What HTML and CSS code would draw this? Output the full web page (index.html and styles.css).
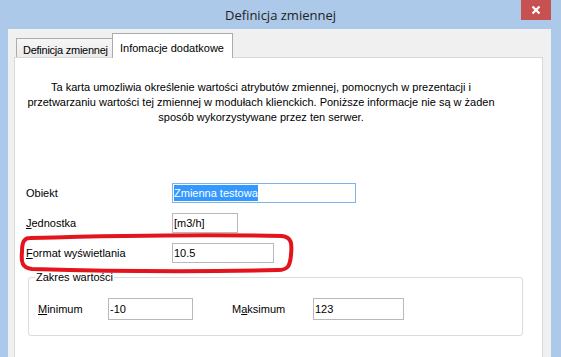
FILE: index.html
```html
<!DOCTYPE html>
<html>
<head>
<meta charset="utf-8">
<link rel="stylesheet" href="styles.css">
</head>
<body>
<div class="window">
  <div class="titlebar">
    <div class="title">Definicja zmiennej</div>
    <div class="close">
      <svg width="30" height="20" viewBox="0 0 30 20"><path d="M11.5 6.5 L18.5 13.5 M18.5 6.5 L11.5 13.5" stroke="#fff" stroke-width="2.2" fill="none"/></svg>
    </div>
  </div>
  <div class="client">
    <div class="tabs">
      <div class="tab">Definicja zmiennej</div>
      <div class="tab active">Infomacje dodatkowe</div>
    </div>
    <div class="panel">
      <p class="info">Ta karta umozliwia określenie wartości atrybutów zmiennej, pomocnych w prezentacji i<br>przetwarzaniu wartości tej zmiennej w modułach klienckich. Poniższe informacje nie są w żaden<br>sposób wykorzystywane przez ten serwer.</p>
      <div class="form">
        <span class="label">Obiekt</span>
        <div class="field focus w-obj"><span class="sel">Zmienna testowa</span></div>
        <span class="label"><u>J</u>ednostka</span>
        <div class="field w-unit">[m3/h]</div>
        <span class="label"><u>F</u>ormat wyświetlania</span>
        <div class="field w-fmt">10.5</div>
      </div>
      <fieldset class="group">
        <legend>Zakres wartości</legend>
        <div class="range">
          <span class="label lmin"><u>M</u>inimum</span>
          <div class="field tall w-min">-10</div>
          <span class="label lmax">M<u>a</u>ksimum</span>
          <div class="field tall w-max">123</div>
        </div>
      </fieldset>
      <svg class="annot" width="282" height="44" viewBox="0 0 282 44">
        <path d="M12 6 C 82 4 182 2 264 4 C 274 5 274 12 273 23 C 272 34 270 38 260 38 C 182 40 82 39 14 37 C 4 36 3 30 4 20 C 4 10 6 6 12 6 Z" fill="none" stroke="#e4141d" stroke-width="4" stroke-linejoin="round"/>
      </svg>
    </div>
  </div>
</div>
</body>
</html>
```
FILE: styles.css
```css
html, body {
  margin: 0;
  padding: 0;
}
body {
  width: 561px;
  height: 357px;
  overflow: hidden;
  background: #acc9e9;
  font-family: "Liberation Sans", Arial, sans-serif;
  font-size: 11px;
  color: #000;
}
.window {
  display: flex;
  flex-direction: column;
  height: 357px;
}
.titlebar {
  height: 29px;
  display: grid;
  grid-template-columns: 1fr auto 1fr;
  align-items: start;
}
.title {
  grid-column: 2;
  font-family: "Open Sans", "Liberation Sans", sans-serif;
  font-size: 13px;
  line-height: 30px;
  color: #222;
}
.close {
  grid-column: 3;
  justify-self: end;
  margin-right: 10px;
  width: 30px;
  height: 20px;
  background: #c75050;
}
.close svg {
  display: block;
}
.client {
  flex: 1;
  margin: 0 10px 0 8px;
  background: #f0f0f0;
  padding: 4px 8px 0 6px;
  display: flex;
  flex-direction: column;
}
.tabs {
  display: flex;
  align-items: flex-end;
  height: 24px;
  padding-left: 2px;
}
.tab {
  box-sizing: border-box;
  height: 19px;
  width: 97px;
  border: 1px solid #acacac;
  border-bottom: none;
  background: linear-gradient(#f6f6f6, #ebebeb);
  padding: 4px 0 0 6px;
  line-height: 14px;
  letter-spacing: -0.25px;
  white-space: nowrap;
}
.tab.active {
  position: relative;
  z-index: 1;
  height: 25px;
  width: 121px;
  margin-left: -1px;
  margin-bottom: -1px;
  background: #fff;
  padding: 7px 0 0 7px;
  letter-spacing: 0;
}
.panel {
  flex: 1;
  position: relative;
  background: #fff;
  border: 1px solid #d9d9d9;
  border-bottom: none;
}
.info {
  margin: 22px 0 0 7px;
  width: 478px;
  text-align: center;
  line-height: 15px;
  white-space: nowrap;
}
.form {
  margin-top: 58px;
  padding-left: 11px;
  display: grid;
  grid-template-columns: 146px auto;
  row-gap: 10px;
  align-items: center;
  justify-items: start;
}
.field {
  box-sizing: border-box;
  height: 20px;
  border: 1px solid #b9b9b9;
  background: #fff;
  padding: 0 0 0 1px;
  line-height: 18px;
  white-space: nowrap;
}
.field.focus {
  border-color: #7eb4ea;
}
.sel {
  display: inline-block;
  background: #3399ff;
  color: #fff;
  line-height: 16px;
  margin-top: 1px;
  vertical-align: top;
}
.w-obj { width: 184px; }
.w-unit { width: 66px; }
.w-fmt { width: 102px; }
.w-min { width: 85px; }
.w-max { width: 91px; }
.field.tall {
  height: 22px;
  line-height: 20px;
}
.group {
  box-sizing: border-box;
  margin: 8px 0 0 13px;
  width: 495px;
  padding: 0 0 15px 9px;
  border: 1px solid #dcdcdc;
  border-radius: 3px;
}
.group legend {
  margin-left: -3px;
  padding: 0 1px;
  line-height: 13px;
}
.range {
  margin-top: 14px;
  display: flex;
  align-items: center;
}
.lmin { width: 70px; }
.lmax {
  margin-left: 39px;
  width: 81px;
}
.annot {
  position: absolute;
  left: 3px;
  top: 174px;
  pointer-events: none;
}
```
